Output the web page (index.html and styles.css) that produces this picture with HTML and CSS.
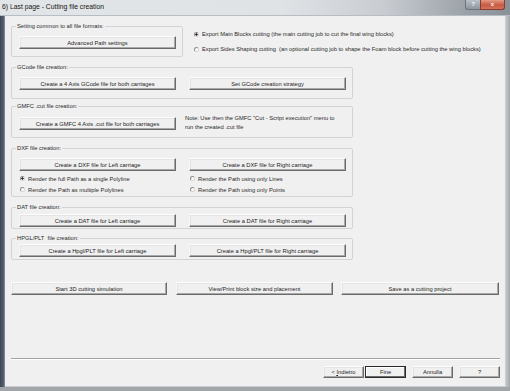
FILE: index.html
```html
<!DOCTYPE html>
<html>
<head>
<meta charset="utf-8">
<link rel="stylesheet" href="styles.css">
</head>
<body>
<div class="window">
  <div class="titlebar">
    <span class="title">6) Last page - Cutting file creation</span>
    <div class="caption">
      <span class="cap cap-help">?</span>
      <span class="cap cap-close">x</span>
    </div>
  </div>
  <div class="frame">
    <div class="edge-left"></div>
    <div class="client">
      <div class="row-top">
        <fieldset class="group group-common">
          <legend>Setting common to all file formats:</legend>
          <button class="btn">Advanced Path settings</button>
        </fieldset>
        <div class="export-opts">
          <div class="radio"><span class="dot on"></span>Export Main Blocks cutting (the main cutting job to cut the final wing blocks)</div>
          <div class="radio"><span class="dot"></span>Export Sides Shaping cutting&nbsp; (an optional cutting job to shape the Foam block before cutting the wing blocks)</div>
        </div>
      </div>

      <fieldset class="group wide g-gcode">
        <legend>GCode file creation:</legend>
        <div class="cols">
          <button class="btn">Create a 4 Axis GCode file for both carriages</button>
          <button class="btn">Set GCode creation strategy</button>
        </div>
      </fieldset>

      <fieldset class="group wide g-gmfc">
        <legend>GMFC .cut file creation:</legend>
        <div class="cols">
          <button class="btn">Create a GMFC 4 Axis .cut file for both carriages</button>
          <p class="note">Note: Use then the GMFC "Cut - Script execution" menu to<br>run the created .cut file</p>
        </div>
      </fieldset>

      <fieldset class="group wide g-dxf">
        <legend>DXF file creation:</legend>
        <div class="cols">
          <button class="btn">Create a DXF file for Left carriage</button>
          <button class="btn">Create a DXF file for Right carriage</button>
        </div>
        <div class="radio-grid">
          <div class="radio"><span class="dot on"></span>Render the full Path as a single Polyline</div>
          <div class="radio"><span class="dot"></span>Render the Path using only Lines</div>
          <div class="radio"><span class="dot"></span>Render the Path as multiple Polylines</div>
          <div class="radio"><span class="dot"></span>Render the Path using only Points</div>
        </div>
      </fieldset>

      <fieldset class="group wide g-dat">
        <legend>DAT file creation:</legend>
        <div class="cols">
          <button class="btn">Create a DAT file for Left carriage</button>
          <button class="btn">Create a DAT file for Right carriage</button>
        </div>
      </fieldset>

      <fieldset class="group wide g-hpgl">
        <legend>HPGL/PLT&nbsp; file creation:</legend>
        <div class="cols">
          <button class="btn">Create a Hpgl/PLT file for Left carriage</button>
          <button class="btn">Create a Hpgl/PLT file for Right carriage</button>
        </div>
      </fieldset>

      <div class="actions">
        <button class="btn a1">Start 3D cutting simulation</button>
        <button class="btn a2">View/Print block size and placement</button>
        <button class="btn a3">Save as a cutting project</button>
      </div>

      <div class="separator"></div>

      <div class="wizard">
        <button class="btn wbtn">&lt; <u>I</u>ndietro</button>
        <button class="btn wbtn default">Fine</button>
        <button class="btn wbtn gap">Annulla</button>
        <button class="btn wbtn gap">?</button>
      </div>
    </div>
    <div class="edge-right"></div>
  </div>
  <div class="edge-bottom"><span class="grip"></span></div>
</div>
</body>
</html>
```

FILE: styles.css
```css
* { box-sizing: border-box; }
html, body { margin: 0; padding: 0; }
body {
  width: 510px;
  height: 391px;
  overflow: hidden;
  background: #a4a8ad;
  font-family: "Liberation Sans", Arial, sans-serif;
  font-size: 5.75px;
  color: #1c1c1c;
}

.window {
  width: 510px;
  height: 391px;
  display: flex;
  flex-direction: column;
}

/* ---------- title bar ---------- */
.titlebar {
  height: 16px;
  display: flex;
  justify-content: space-between;
  align-items: flex-start;
  background: linear-gradient(to right, #e2e5e8 0%, #e0e3e6 55%, #c9cdd2 75%, #9aa0a7 92%, #8a9098 100%);
  border-bottom: 1px solid #b7bdc4;
}
.title {
  font-size: 6.8px;
  line-height: 14px;
  padding-left: 2px;
  color: #151515;
}
.caption {
  display: flex;
  margin-right: 5px;
}
.cap {
  height: 10px;
  line-height: 9px;
  text-align: center;
  font-size: 6px;
  font-weight: bold;
  color: #f4f4f4;
  border: 1px solid #6d747c;
  border-top: none;
}
.cap-help {
  width: 15px;
  background: linear-gradient(#b9c0c8, #8e969f);
  border-radius: 0 0 0 3px;
  border-right: none;
}
.cap-close {
  width: 25px;
  background: linear-gradient(#e59a86, #c85a43 55%, #d2735c);
  border-color: #8a3a2e;
  border-radius: 0 0 3px 0;
}

/* ---------- frame ---------- */
.frame {
  flex: 1;
  display: flex;
}
.edge-left {
  width: 5px;
  background: linear-gradient(to right, #3d4858, #55606e 70%, #8f99a4);
}
.edge-right {
  width: 4px;
  background: linear-gradient(to right, #c4c7ca, #a2a5a9);
}
.edge-bottom {
  height: 4px;
  background: #a3a6a9;
  display: flex;
  justify-content: flex-end;
}
.grip {
  width: 6px;
  height: 4px;
}

.client {
  width: 501px;
  background: #f0f0f0;
  display: flex;
  flex-direction: column;
  padding-left: 6px;
  border-right: 1px solid #c9ccd0;
  border-bottom: 1px solid #c9ccd0;
}

/* ---------- group boxes ---------- */
.group {
  margin: 0;
  border: 1px solid #d3d3d3;
  border-radius: 2px;
  padding: 6px 6px 7px 7px;
  min-width: 0;
}
.group legend {
  margin-left: -3px;
  padding: 0 1px;
  line-height: 8px;
  color: #2a2a2a;
}
.wide { width: 342px; }

.row-top {
  display: flex;
  margin-top: 6px;
}
.group-common { width: 172px; }

.export-opts {
  margin-left: 10px;
  padding-top: 8px;
  display: flex;
  flex-direction: column;
  gap: 7px;
}

.g-gcode { margin-top: 6px; padding-bottom: 8px; }
.g-gmfc  { margin-top: 3px; padding-top: 7px; padding-bottom: 7px; }
.g-dxf   { margin-top: 6px; padding-bottom: 1px; }
.g-dat   { margin-top: 6px; padding-top: 3px; padding-bottom: 1px; }
.g-hpgl  { margin-top: 5px; padding-top: 2px; padding-bottom: 2px; }

.cols {
  display: flex;
  gap: 13px;
  align-items: flex-start;
}
.cols .btn { width: 157px; }

.note {
  margin: -3px 0 -1px -4px;
  line-height: 8.5px;
  color: #2a2a2a;
}

.radio-grid {
  margin-top: 2px;
  display: grid;
  grid-template-columns: 157px 157px;
  column-gap: 13px;
  grid-auto-rows: 11px;
  align-items: center;
}

.radio {
  display: flex;
  align-items: center;
  line-height: 8px;
  white-space: nowrap;
  color: #2a2a2a;
}
.dot {
  width: 5px;
  height: 5px;
  border-radius: 50%;
  border: 1px solid #8d8d8d;
  border-right-color: #d6d6d6;
  border-bottom-color: #d6d6d6;
  background: #fff;
  margin-left: 1px;
  margin-right: 3px;
  flex: none;
}
.dot.on {
  background: radial-gradient(circle, #1e1e1e 0, #1e1e1e 0.9px, #fff 1.4px);
}

/* ---------- buttons ---------- */
.btn {
  height: 13px;
  padding: 0;
  margin: 0;
  font: inherit;
  color: #1c1c1c;
  background: #f0f0f0;
  border: 1px solid;
  border-color: #fdfdfd #6a6a6a #6a6a6a #f6f6f6;
  box-shadow: inset -1px -1px 0 #a9a9a9, inset 1px 1px 0 #e4e4e4;
  text-align: center;
  white-space: nowrap;
  display: block;
}
.group-common .btn { width: 157px; }

.actions {
  display: flex;
  margin-top: 22px;
}
.a1 { width: 156px; }
.a2 { width: 157px; margin-left: 9px; }
.a3 { width: 158px; margin-left: 8px; }

.separator {
  margin-top: 63px;
  width: 489px;
  height: 2px;
  border-top: 1px solid #a3a3a3;
  border-bottom: 1px solid #ffffff;
}

.wizard {
  margin-top: 6px;
  display: flex;
  justify-content: flex-end;
  padding-right: 5px;
}
.wbtn {
  width: 41px;
  height: 12px;
  line-height: 10px;
}
.wbtn + .wbtn { margin-left: 1px; }
.wbtn.gap { margin-left: 6px; }
.wbtn.default {
  border-color: #2a2a2a;
  box-shadow: inset -1px -1px 0 #6a6a6a, inset 1px 1px 0 #ffffff;
}
.wbtn u { text-decoration: underline; }
```
